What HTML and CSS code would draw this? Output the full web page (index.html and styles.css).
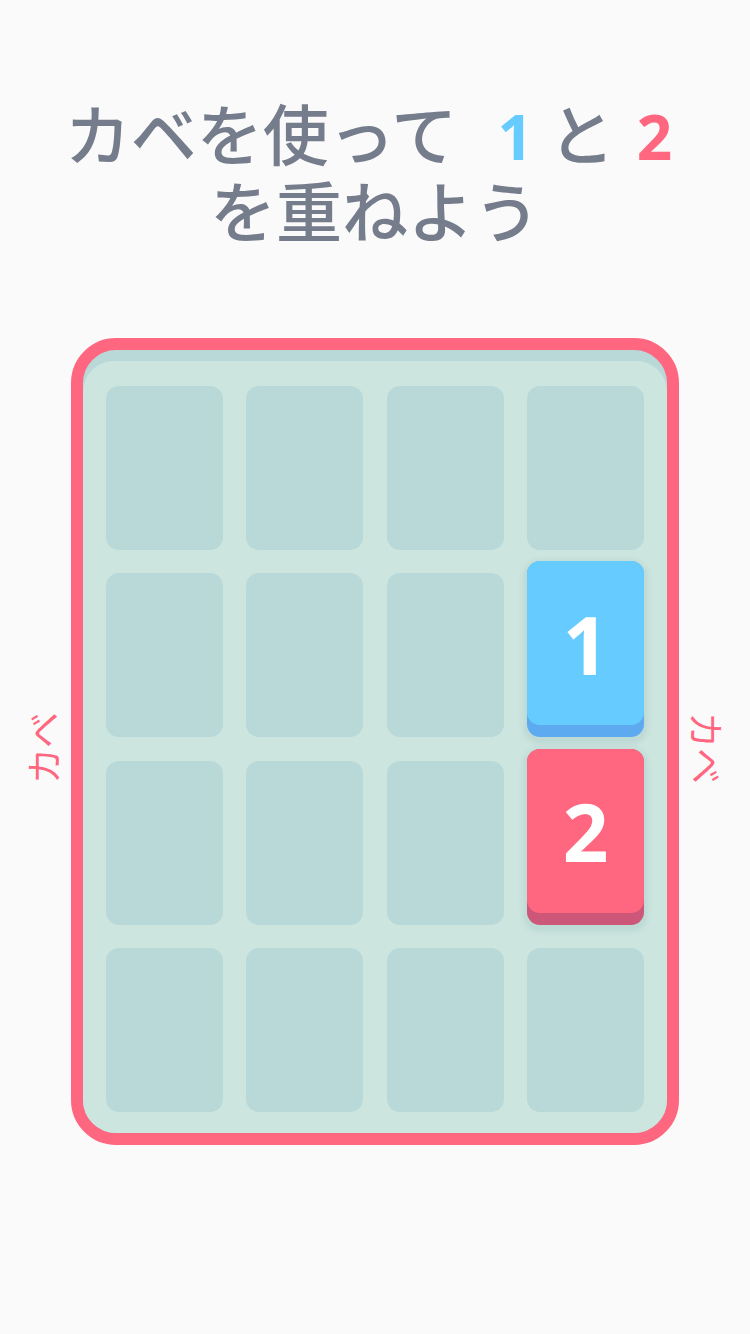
FILE: index.html
```html
<!DOCTYPE html>
<html lang="ja">

<head>
    <meta charset="UTF-8">
    <meta name="viewport" content="width=device-width, initial-scale=1.0">
    <title>カベを使って 1 と 2 を重ねよう</title>
    <link rel="stylesheet" href="styles.css">
</head>

<body>

    <h1 class="title">カベを使って<span class="num one">1</span>と<span class="num two">2</span><br>を重ねよう</h1>

    <div class="stage">
        <span class="wall-label left">カベ</span>

        <!-- 4x4 board, the red rim is the wall -->
        <div class="board">
            <div class="grid">
                <div class="cell"></div>
                <div class="cell"></div>
                <div class="cell"></div>
                <div class="cell"></div>

                <div class="cell"></div>
                <div class="cell"></div>
                <div class="cell"></div>
                <div class="cell slot"><div class="tile blue"><div class="face">1</div></div></div>

                <div class="cell"></div>
                <div class="cell"></div>
                <div class="cell"></div>
                <div class="cell slot"><div class="tile red"><div class="face">2</div></div></div>

                <div class="cell"></div>
                <div class="cell"></div>
                <div class="cell"></div>
                <div class="cell"></div>
            </div>
        </div>

        <span class="wall-label right">カベ</span>
    </div>

</body>

</html>
```

FILE: styles.css
```css
* {
    margin: 0;
    padding: 0;
    box-sizing: border-box;
}

body {
    font-family: "Noto Sans CJK JP", "Noto Sans", sans-serif;
    -webkit-font-smoothing: antialiased;
    background-color: #fafafa;
    width: 750px;
    height: 1334px;
    overflow: hidden;
}

.title {
    padding-top: 93px;
    font-size: 66px;
    line-height: 77px;
    font-weight: 500;
    color: #757c8b;
    text-align: center;
}

.num {
    font-family: "Noto Sans", sans-serif;
    font-weight: 700;
    font-size: 62px;
    line-height: 1;
}

.one {
    color: #66ccff;
    margin: 0 16px 0 40px;
}

.two {
    color: #ff6680;
    margin: 0 13px 0 22px;
}

.stage {
    margin-top: 91px;
    display: flex;
    justify-content: center;
    align-items: center;
    gap: 12px;
}

.wall-label {
    writing-mode: vertical-rl;
    text-orientation: sideways;
    font-size: 36px;
    line-height: 34px;
    width: 34px;
    color: #ff6680;
    margin-top: 14px;
}

.wall-label.left {
    transform: rotate(180deg);
}

.board {
    width: 608px;
    height: 807px;
    border: 12px solid #ff6680;
    border-radius: 45px;
    background-color: #b9d8d8;
    padding-top: 11px;
}

.grid {
    height: 100%;
    background-color: #cde5df;
    border-radius: 31px 31px 33px 33px;
    padding: 25px 23px 21px;
    display: grid;
    grid-template-columns: repeat(4, 1fr);
    grid-auto-rows: 164px;
    gap: 23.3px 23.5px;
}

.cell {
    background-color: #b9d8d8;
    border-radius: 13px;
}

.cell.slot {
    background: none;
}

/* raised tile: face on top of a darker base */
.tile {
    height: 176px;
    margin-top: -12px;
    padding-bottom: 12px;
    border-radius: 13px;
    box-shadow: 0 3px 5px 4px rgba(130, 175, 175, 0.2);
}

.tile.blue {
    background-color: #5eaaf0;
}

.tile.red {
    background-color: #cc5779;
}

.face {
    height: 100%;
    border-radius: 13px;
    display: flex;
    justify-content: center;
    align-items: center;
    font-family: "Noto Sans", sans-serif;
    font-weight: 700;
    font-size: 80px;
    color: #ffffff;
}

.blue .face {
    background-color: #66ccff;
}

.red .face {
    background-color: #ff6680;
}
```
